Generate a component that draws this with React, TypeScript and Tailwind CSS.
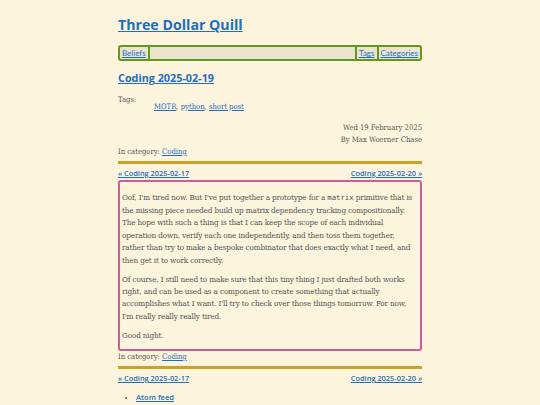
import type { ReactNode } from "react";

const serif = "font-['DejaVu_Serif_Condensed','DejaVu_Serif',serif]";
const sans = "font-['Open_Sans','Lato',sans-serif]";

function A({ children, className = "" }: { children: ReactNode; className?: string }) {
  return (
    <a href="#" className={`text-[#1f6fbf] underline ${className}`}>
      {children}
    </a>
  );
}

function PostNav() {
  return (
    <div className={`flex justify-between text-[7.4px] font-semibold leading-[10px] ${sans}`}>
      <A>« Coding 2025-02-17</A>
      <A>Coding 2025-02-20 »</A>
    </div>
  );
}

function Category() {
  return (
    <p className="text-[7.6px] leading-[12px]">
      In category: <A>Coding</A>
    </p>
  );
}

export default function App() {
  return (
    <div className={`min-h-[405px] bg-[#fcf4dc] ${serif} text-[#555]`}>
      <div className="mx-auto w-[304px] pt-[15px]">
        <h1 className={`text-[14.2px] font-bold leading-[20px] ${sans}`}>
          <A>Three Dollar Quill</A>
        </h1>

        <nav className="mt-[10px] flex h-[16px] items-stretch rounded-[3px] border-2 border-[#5e9a1e] bg-[#ece4cf] font-['Lato',sans-serif] text-[8px]">
          <span className="flex items-center border-r-2 border-[#5e9a1e] px-[2px]">
            <A>Beliefs</A>
          </span>
          <span className="flex-1" />
          <span className="flex items-center border-l-2 border-[#5e9a1e] px-[2px]">
            <A>Tags</A>
          </span>
          <span className="flex items-center border-l-2 border-[#5e9a1e] px-[2px]">
            <A>Categories</A>
          </span>
        </nav>

        <h2 className={`mt-[8px] text-[10.8px] font-bold leading-[18px] ${sans}`}>
          <A>Coding 2025-02-19</A>
        </h2>

        <div className="mt-[7px] text-[7.6px] leading-[12px]">
          <p>Tags:</p>
          <p className="-mt-[5px] pl-[36px]">
            <A>MOTR</A>, <A>python</A>, <A>short post</A>
          </p>
        </div>

        <div className="mt-[9px] text-right text-[7.6px] leading-[12px]">
          <p>Wed 19 February 2025</p>
          <p>By Max Woerner Chase</p>
        </div>

        <Category />
        <div className="mt-[3px] h-[3px] bg-[#c9a227]" />

        <div className="mt-[4px]">
          <PostNav />
        </div>

        <article className="mt-[2px] rounded-[3px] border-2 border-[#cf5c9c] px-[2px] pb-[8px] pt-[8.5px] text-[8.1px] leading-[12.4px] tracking-[-0.15px]">
          <p>
            Oof, I'm tired now. But I've put together a prototype for a{" "}
            <code className="font-['DejaVu_Sans_Mono',monospace] text-[7.3px] tracking-normal">matrix</code> primitive
            that is the missing piece needed build up matrix dependency tracking compositionally. The hope with such a
            thing is that I can keep the scope of each individual operation down, verify each one independently, and
            then toss them together, rather than try to make a bespoke combinator that does exactly what I need, and then
            get it to work correctly.
          </p>
          <p className="mt-[6.6px]">
            Of course, I still need to make sure that this tiny thing I just drafted both works right, and can be used as
            a component to create something that actually accomplishes what I want. I'll try to check over those things
            tomorrow. For now, I'm really really really tired.
          </p>
          <p className="mt-[6.6px]">Good night.</p>
        </article>

        <Category />
        <div className="mt-[3px] h-[3px] bg-[#c9a227]" />

        <div className="mt-[4px]">
          <PostNav />
        </div>

        <ul className="mt-[8px] list-disc pl-[18px] text-[7.6px] leading-[12px]">
          <li>
            <A className={`font-semibold ${sans}`}>Atom feed</A>
          </li>
        </ul>
      </div>
    </div>
  );
}
